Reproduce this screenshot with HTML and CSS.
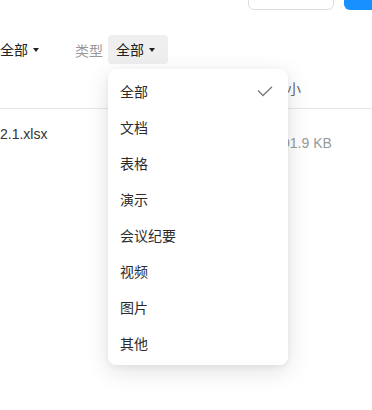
FILE: index.html
```html
<!DOCTYPE html>
<html lang="zh-CN">
<head>
    <meta charset="UTF-8">
    <meta name="viewport" content="width=device-width, initial-scale=1.0">
    <title>文件列表</title>
    <link rel="stylesheet" href="styles.css">
</head>
<body>
    <div class="page">
        <div class="toolbar">
            <button class="btn btn-default"></button>
            <button class="btn btn-primary"></button>
        </div>

        <div class="filters">
            <div class="filter filter-owner">
                <span>全部</span>
                <span class="caret"></span>
            </div>

            <span class="filter-label">类型</span>
            <div class="filter-wrap">
                <div class="filter filter-active">
                    <span>全部</span>
                    <span class="caret"></span>
                </div>

                <ul class="menu">
                    <li class="menu-item selected">
                        <span>全部</span>
                        <svg class="check" width="16" height="11" viewBox="0 0 16 11">
                            <polyline points="1,4.5 6,9.5 15,0.8" fill="none" stroke="#7a7a7a" stroke-width="1.3"/>
                        </svg>
                    </li>
                    <li class="menu-item"><span>文档</span></li>
                    <li class="menu-item"><span>表格</span></li>
                    <li class="menu-item"><span>演示</span></li>
                    <li class="menu-item"><span>会议纪要</span></li>
                    <li class="menu-item"><span>视频</span></li>
                    <li class="menu-item"><span>图片</span></li>
                    <li class="menu-item"><span>其他</span></li>
                </ul>
            </div>
        </div>

        <div class="table">
            <div class="table-head">
                <div class="col-name"></div>
                <div class="col-size">大小</div>
            </div>
            <div class="table-row">
                <div class="col-name file-name">2.1.xlsx</div>
                <div class="col-size file-size">91.9 KB</div>
            </div>
        </div>
    </div>
</body>
</html>
```

FILE: styles.css
```css
* {
    margin: 0;
    padding: 0;
    box-sizing: border-box;
}

body {
    font-family: 'Liberation Sans', 'Noto Sans CJK SC', sans-serif;
    font-size: 14px;
    color: #333;
    background: #fff;
}

.page {
    min-height: 100vh;
    overflow: hidden;
}

.toolbar {
    display: flex;
    justify-content: flex-end;
    gap: 10px;
    height: 32px;
    margin-top: -22px;
}

.btn {
    height: 32px;
    border-radius: 6px;
    border: none;
}

.btn-default {
    width: 86px;
    border: 1px solid #dedede;
    background: #fff;
}

.btn-primary {
    width: 40px;
    margin-right: -12px;
    background: #1890ff;
}

.filters {
    display: flex;
    align-items: center;
    height: 29px;
    margin-top: 25px;
}

.filter {
    display: flex;
    align-items: center;
    height: 29px;
    line-height: 20px;
    color: #222;
}

.caret {
    width: 0;
    height: 0;
    margin-left: 5px;
    border-left: 3.5px solid transparent;
    border-right: 3.5px solid transparent;
    border-top: 4.5px solid #222;
}

.filter-label {
    margin-left: 36px;
    color: #999;
}

.filter-wrap {
    position: relative;
    margin-left: 5px;
}

.filter-active {
    padding: 0 13px 0 8px;
    background: #efefef;
    border-radius: 4px;
}

.menu {
    position: absolute;
    top: calc(100% + 5px);
    left: 0;
    z-index: 10;
    width: 180px;
    padding: 4px 0;
    list-style: none;
    background: #fff;
    border-radius: 8px;
    box-shadow: 0 6px 24px rgba(0, 0, 0, 0.12), 0 2px 6px rgba(0, 0, 0, 0.05);
}

.menu-item {
    display: flex;
    align-items: center;
    justify-content: space-between;
    height: 36px;
    padding: 0 15px 0 12px;
    color: #2b2b2b;
}

.table {
    margin-top: 4px;
}

.table-head,
.table-row {
    display: grid;
    grid-template-columns: 273px 1fr;
}

.table-head {
    height: 41px;
    align-items: center;
    border-bottom: 1px solid #e6e6e6;
    color: #666;
}

.table-row {
    padding-top: 15px;
    line-height: 20px;
}

.file-name {
    color: #333;
}

.file-size {
    padding-left: 9px;
    margin-top: 9px;
    color: #999;
}
```
